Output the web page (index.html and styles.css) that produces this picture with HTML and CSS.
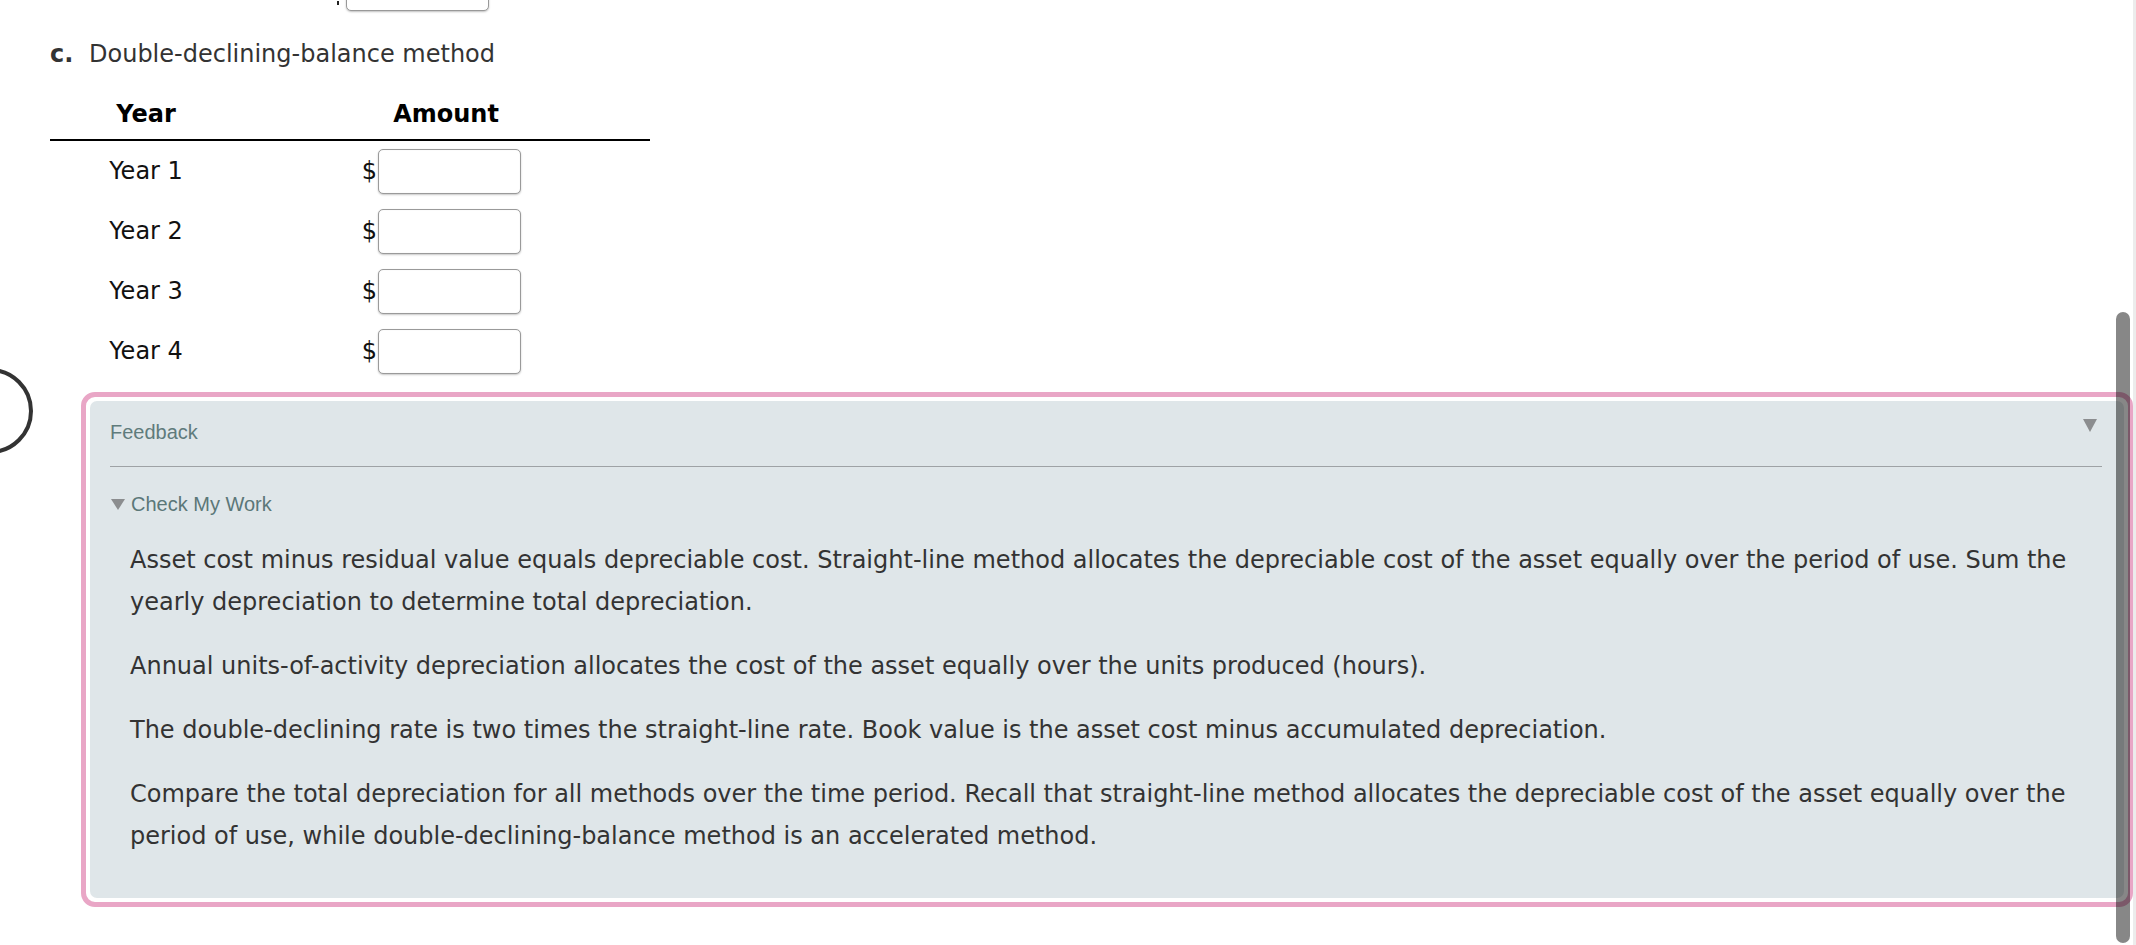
FILE: index.html
```html
<!DOCTYPE html>
<html lang="en">
<head>
<meta charset="utf-8">
<title>Double-declining-balance method</title>
<link rel="stylesheet" href="styles.css">
</head>
<body>
<div class="page">
  <div class="prev-row">
    <span class="prev-tick"></span>
    <span class="prev-box"></span>
    <span class="prev-mark"></span>
  </div>

  <h3 class="part-title"><span class="part-label">c.</span>Double-declining-balance method</h3>

  <div class="table">
    <div class="th">Year</div>
    <div class="th">Amount</div>

    <div class="td year">Year 1</div>
    <div class="td amount"><span class="dollar">$</span><input class="field" type="text" aria-label="Year 1 amount"></div>

    <div class="td year">Year 2</div>
    <div class="td amount"><span class="dollar">$</span><input class="field" type="text" aria-label="Year 2 amount"></div>

    <div class="td year">Year 3</div>
    <div class="td amount"><span class="dollar">$</span><input class="field" type="text" aria-label="Year 3 amount"></div>

    <div class="td year">Year 4</div>
    <div class="td amount"><span class="dollar">$</span><input class="field" type="text" aria-label="Year 4 amount"></div>
  </div>

  <div class="feedback-outer">
    <div class="feedback">
      <div class="feedback-head">
        <span class="feedback-title">Feedback</span>
        <svg class="head-caret" width="14" height="13" viewBox="0 0 14 13"><polygon points="0,0 14,0 7,13" fill="#8b8d8f"/></svg>
      </div>
      <div class="cmw">
        <svg class="cmw-caret" width="14" height="11" viewBox="0 0 14 11"><polygon points="0,0 14,0 7,11" fill="#8b8d8f"/></svg>
        <span>Check My Work</span>
      </div>
      <div class="feedback-body">
        <p>Asset cost minus residual value equals depreciable cost. Straight-line method allocates the depreciable cost of the asset equally over the period of use. Sum the yearly depreciation to determine total depreciation.</p>
        <p>Annual units-of-activity depreciation allocates the cost of the asset equally over the units produced (hours).</p>
        <p>The double-declining rate is two times the straight-line rate. Book value is the asset cost minus accumulated depreciation.</p>
        <p>Compare the total depreciation for all methods over the time period. Recall that straight-line method allocates the depreciable cost of the asset equally over the period of use, while double-declining-balance method is an accelerated method.</p>
      </div>
    </div>
  </div>
</div>

<div class="side-button"></div>
<div class="scroll-track"></div>
<div class="scroll-thumb"></div>
</body>
</html>
```

FILE: styles.css
```css
html, body {
  margin: 0;
  padding: 0;
  background: #ffffff;
  overflow: hidden;
}

body {
  width: 2136px;
  height: 945px;
  position: relative;
  font-family: "DejaVu Sans", Verdana, sans-serif;
  color: #333333;
}

.page {
  padding-left: 50px;
}

/* partially visible row from the previous part */
.prev-row {
  display: flex;
  align-items: center;
  height: 46px;
  margin-top: -34px;
}

.prev-tick {
  align-self: flex-end;
  margin-left: 287px;
  margin-bottom: 7px;
  width: 2px;
  height: 4px;
  background: #222;
}

.prev-box {
  margin-left: 7px;
  width: 141px;
  height: 42px;
  border: 1px solid #999;
  border-radius: 5px;
  box-shadow: 0 1px 2px rgba(0, 0, 0, 0.25);
  background: #fff;
}

.prev-mark {
  width: 6px;
  height: 3px;
  margin-left: 27px;
  margin-top: -40px;
  background: #9ccf8f;
  border-radius: 2px;
}

.part-title {
  margin: 26px 0 0 0;
  font-size: 24px;
  line-height: 32px;
  font-weight: normal;
  color: #333333;
}

.part-label {
  display: inline-block;
  width: 39px;
  font-weight: bold;
  color: #333333;
}

.table {
  display: grid;
  grid-template-columns: 192px 408px;
  margin-top: 28px;
  width: 600px;
}

.th {
  font-weight: bold;
  font-size: 24px;
  line-height: 32px;
  text-align: center;
  color: #000;
  padding-bottom: 9px;
  border-bottom: 2px solid #000;
}

.td {
  height: 60px;
  display: flex;
  align-items: center;
  justify-content: center;
  font-size: 24px;
  color: #111;
}

.amount {
  padding-right: 9px;
}

.dollar {
  color: #111;
  margin-right: 1px;
}

.field {
  box-sizing: border-box;
  width: 143px;
  height: 45px;
  border: 1px solid #9a9a9a;
  border-radius: 5px;
  box-shadow: 0 1px 2px rgba(0, 0, 0, 0.22), inset 0 0 1px rgba(0, 0, 0, 0.15);
  background: #fff;
  margin: 0;
  padding: 0 8px;
  font-size: 20px;
}

.feedback-outer {
  box-sizing: border-box;
  margin: 11px 0 0 31px;
  width: 2052px;
  height: 515px;
  border: 5px solid #e9a6c6;
  border-radius: 14px;
  padding: 4px;
  background: #fff;
}

.feedback {
  box-sizing: border-box;
  height: 100%;
  background: #dfe6e9;
  border-radius: 7px;
  padding: 20px 22px 0 20px;
}

.feedback-head {
  display: flex;
  justify-content: space-between;
  align-items: flex-start;
  padding-bottom: 22px;
  border-bottom: 1px solid #9ea2a5;
  font-family: "Liberation Sans", Arial, sans-serif;
  font-size: 20px;
  line-height: 23px;
  color: #5f7b7c;
}

.head-caret {
  margin-top: -2px;
  margin-right: 5px;
}

.cmw {
  display: flex;
  align-items: center;
  margin-top: 26px;
  margin-left: 1px;
  font-family: "Liberation Sans", Arial, sans-serif;
  font-size: 20px;
  line-height: 23px;
  color: #5b7778;
}

.cmw-caret {
  margin-right: 6px;
  margin-top: -1px;
}

.feedback-body {
  padding: 23px 0 0 20px;
}

.feedback-body p {
  margin: 0 0 22px 0;
  font-size: 24px;
  line-height: 42px;
  color: #333333;
}

.side-button {
  position: absolute;
  left: -53px;
  top: 368px;
  width: 78px;
  height: 78px;
  border: 4px solid #333;
  border-radius: 50%;
  background: #fff;
}

.scroll-track {
  position: absolute;
  right: 0;
  top: 0;
  width: 3px;
  height: 945px;
  background: #ececec;
}

.scroll-thumb {
  position: absolute;
  left: 2116px;
  top: 312px;
  width: 14px;
  height: 631px;
  border-radius: 7px;
  background: rgba(0, 0, 0, 0.47);
}
```
